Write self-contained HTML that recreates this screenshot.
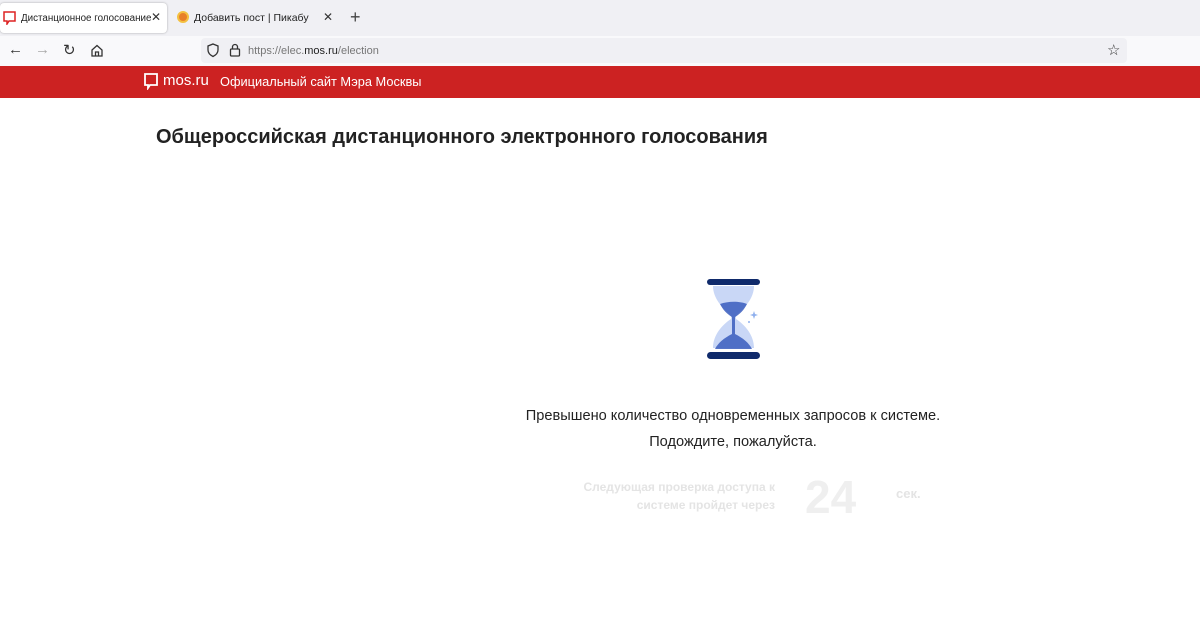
<!DOCTYPE html>
<html><head><meta charset="utf-8"><style>
*{margin:0;padding:0;box-sizing:border-box}
body{width:1200px;height:628px;overflow:hidden;background:#fff;font-family:"Liberation Sans",sans-serif;position:relative}
.abs{position:absolute}
</style></head><body>
<div class="abs" style="left:0;top:0;width:1200px;height:36px;background:#f0f0f4"></div>
<div class="abs" style="left:0;top:3px;width:167px;height:30px;background:#fff;border-radius:4px;box-shadow:0 0 2px rgba(0,0,0,.3)"></div>
<svg class="abs" style="left:3px;top:11px" width="13" height="14"><path d="M1 1h11v9H6l-2 3v-3H1z" fill="none" stroke="#d22" stroke-width="1.5"/></svg>
<div class="abs" style="left:21px;top:13px;font-size:9.8px;color:#222;white-space:nowrap">Дистанционное голосование</div>
<div class="abs" style="left:151px;top:10px;font-size:12px;color:#333">✕</div>
<div class="abs" style="left:177px;top:11px;width:12px;height:12px;border-radius:50%;background:#e8802a;border:2px solid #f4c040"></div>
<div class="abs" style="left:194px;top:12px;font-size:10.5px;color:#222">Добавить пост | Пикабу</div>
<div class="abs" style="left:323px;top:10px;font-size:12px;color:#333">✕</div>
<div class="abs" style="left:350px;top:7px;font-size:18px;color:#444">+</div>
<div class="abs" style="left:0;top:36px;width:1200px;height:30px;background:#f9f9fb"></div>
<div class="abs" style="left:8px;top:41px;font-size:15px;color:#333">←</div>
<div class="abs" style="left:35px;top:41px;font-size:15px;color:#aaa">→</div>
<div class="abs" style="left:63px;top:41px;font-size:15px;color:#333">↻</div>
<svg class="abs" style="left:90px;top:44px" width="14" height="13"><path d="M2 6L7 1.5 12 6V12H2z M5.5 12V8h3v4" fill="none" stroke="#333" stroke-width="1.3"/></svg>
<div class="abs" style="left:201px;top:38px;width:926px;height:25px;background:#f0f0f4;border-radius:4px"></div>
<svg class="abs" style="left:206px;top:43px" width="14" height="15"><path d="M7 1L12 3V7c0 3-2 5-5 6.5C4 12 2 10 2 7V3z" fill="none" stroke="#333" stroke-width="1.3"/></svg>
<svg class="abs" style="left:229px;top:43px" width="12" height="14"><rect x="1.5" y="6" width="9" height="7" rx="1" fill="none" stroke="#333" stroke-width="1.3"/><path d="M3.5 6V4a2.5 2.5 0 015 0v2" fill="none" stroke="#333" stroke-width="1.3"/></svg>
<div class="abs" style="left:248px;top:45px;font-size:11px;color:#777">https://elec.<span style="color:#222">mos.ru</span>/election</div>
<div class="abs" style="left:1107px;top:41px;font-size:15px;color:#333">☆</div>
<div class="abs" style="left:0;top:66px;width:1200px;height:32px;background:#cc2222"></div>
<svg class="abs" style="left:144px;top:73px" width="14" height="17"><path d="M1 1h12v11H6l-2 3v-3H1z" fill="none" stroke="#fff" stroke-width="1.8"/></svg>
<div class="abs" style="left:163px;top:72px;font-size:15px;color:#fff">mos.ru</div>
<div class="abs" style="left:220px;top:74px;font-size:12.8px;color:#fff">Официальный сайт Мэра Москвы</div>
<div class="abs" style="left:156px;top:126px;font-size:20px;font-weight:bold;color:#222;white-space:nowrap">Общероссийская дистанционного электронного голосования</div>
<svg class="abs" style="left:680px;top:270px" width="100" height="100" viewBox="680 270 100 100">
<path d="M713 286h41c0 12-9 22-18 29v4c9 6 18 16 18 29h-41c0-13 9-23 18-29v-4c-9-7-18-17-18-29z" fill="#c9d7f6"/>
<path d="M720 304c8-3 20-3 27 0-3 6-7 10-12 13v17c8 4 14 9 17 15h-37c3-6 9-11 17-15v-17c-5-3-9-7-12-13z" fill="#3a5dbd" opacity=".85"/>
<rect x="707" y="279" width="53" height="6" rx="3" fill="#0f2a6b"/>
<rect x="707" y="352" width="53" height="7" rx="3.5" fill="#0f2a6b"/>
<path d="M754 311l1 3 3 1-3 1-1 3-1-3-3-1 3-1z" fill="#8fb0ee"/>
<circle cx="749" cy="322" r="1" fill="#8fb0ee"/>
</svg>
<div class="abs" style="left:500px;top:403px;width:466px;text-align:center;font-size:14.6px;color:#222;line-height:26px">Превышено количество одновременных запросов к системе.<br>Подождите, пожалуйста.</div>
<div class="abs" style="left:560px;top:478px;width:215px;text-align:right;font-size:12px;font-weight:bold;color:#e4e4e4;line-height:18px">Следующая проверка доступа к<br>системе пройдет через</div>
<div class="abs" style="left:805px;top:470px;font-size:46px;font-weight:bold;color:#efefef">24</div>
<div class="abs" style="left:896px;top:486px;font-size:13px;font-weight:bold;color:#e4e4e4">сек.</div>
</body></html>
